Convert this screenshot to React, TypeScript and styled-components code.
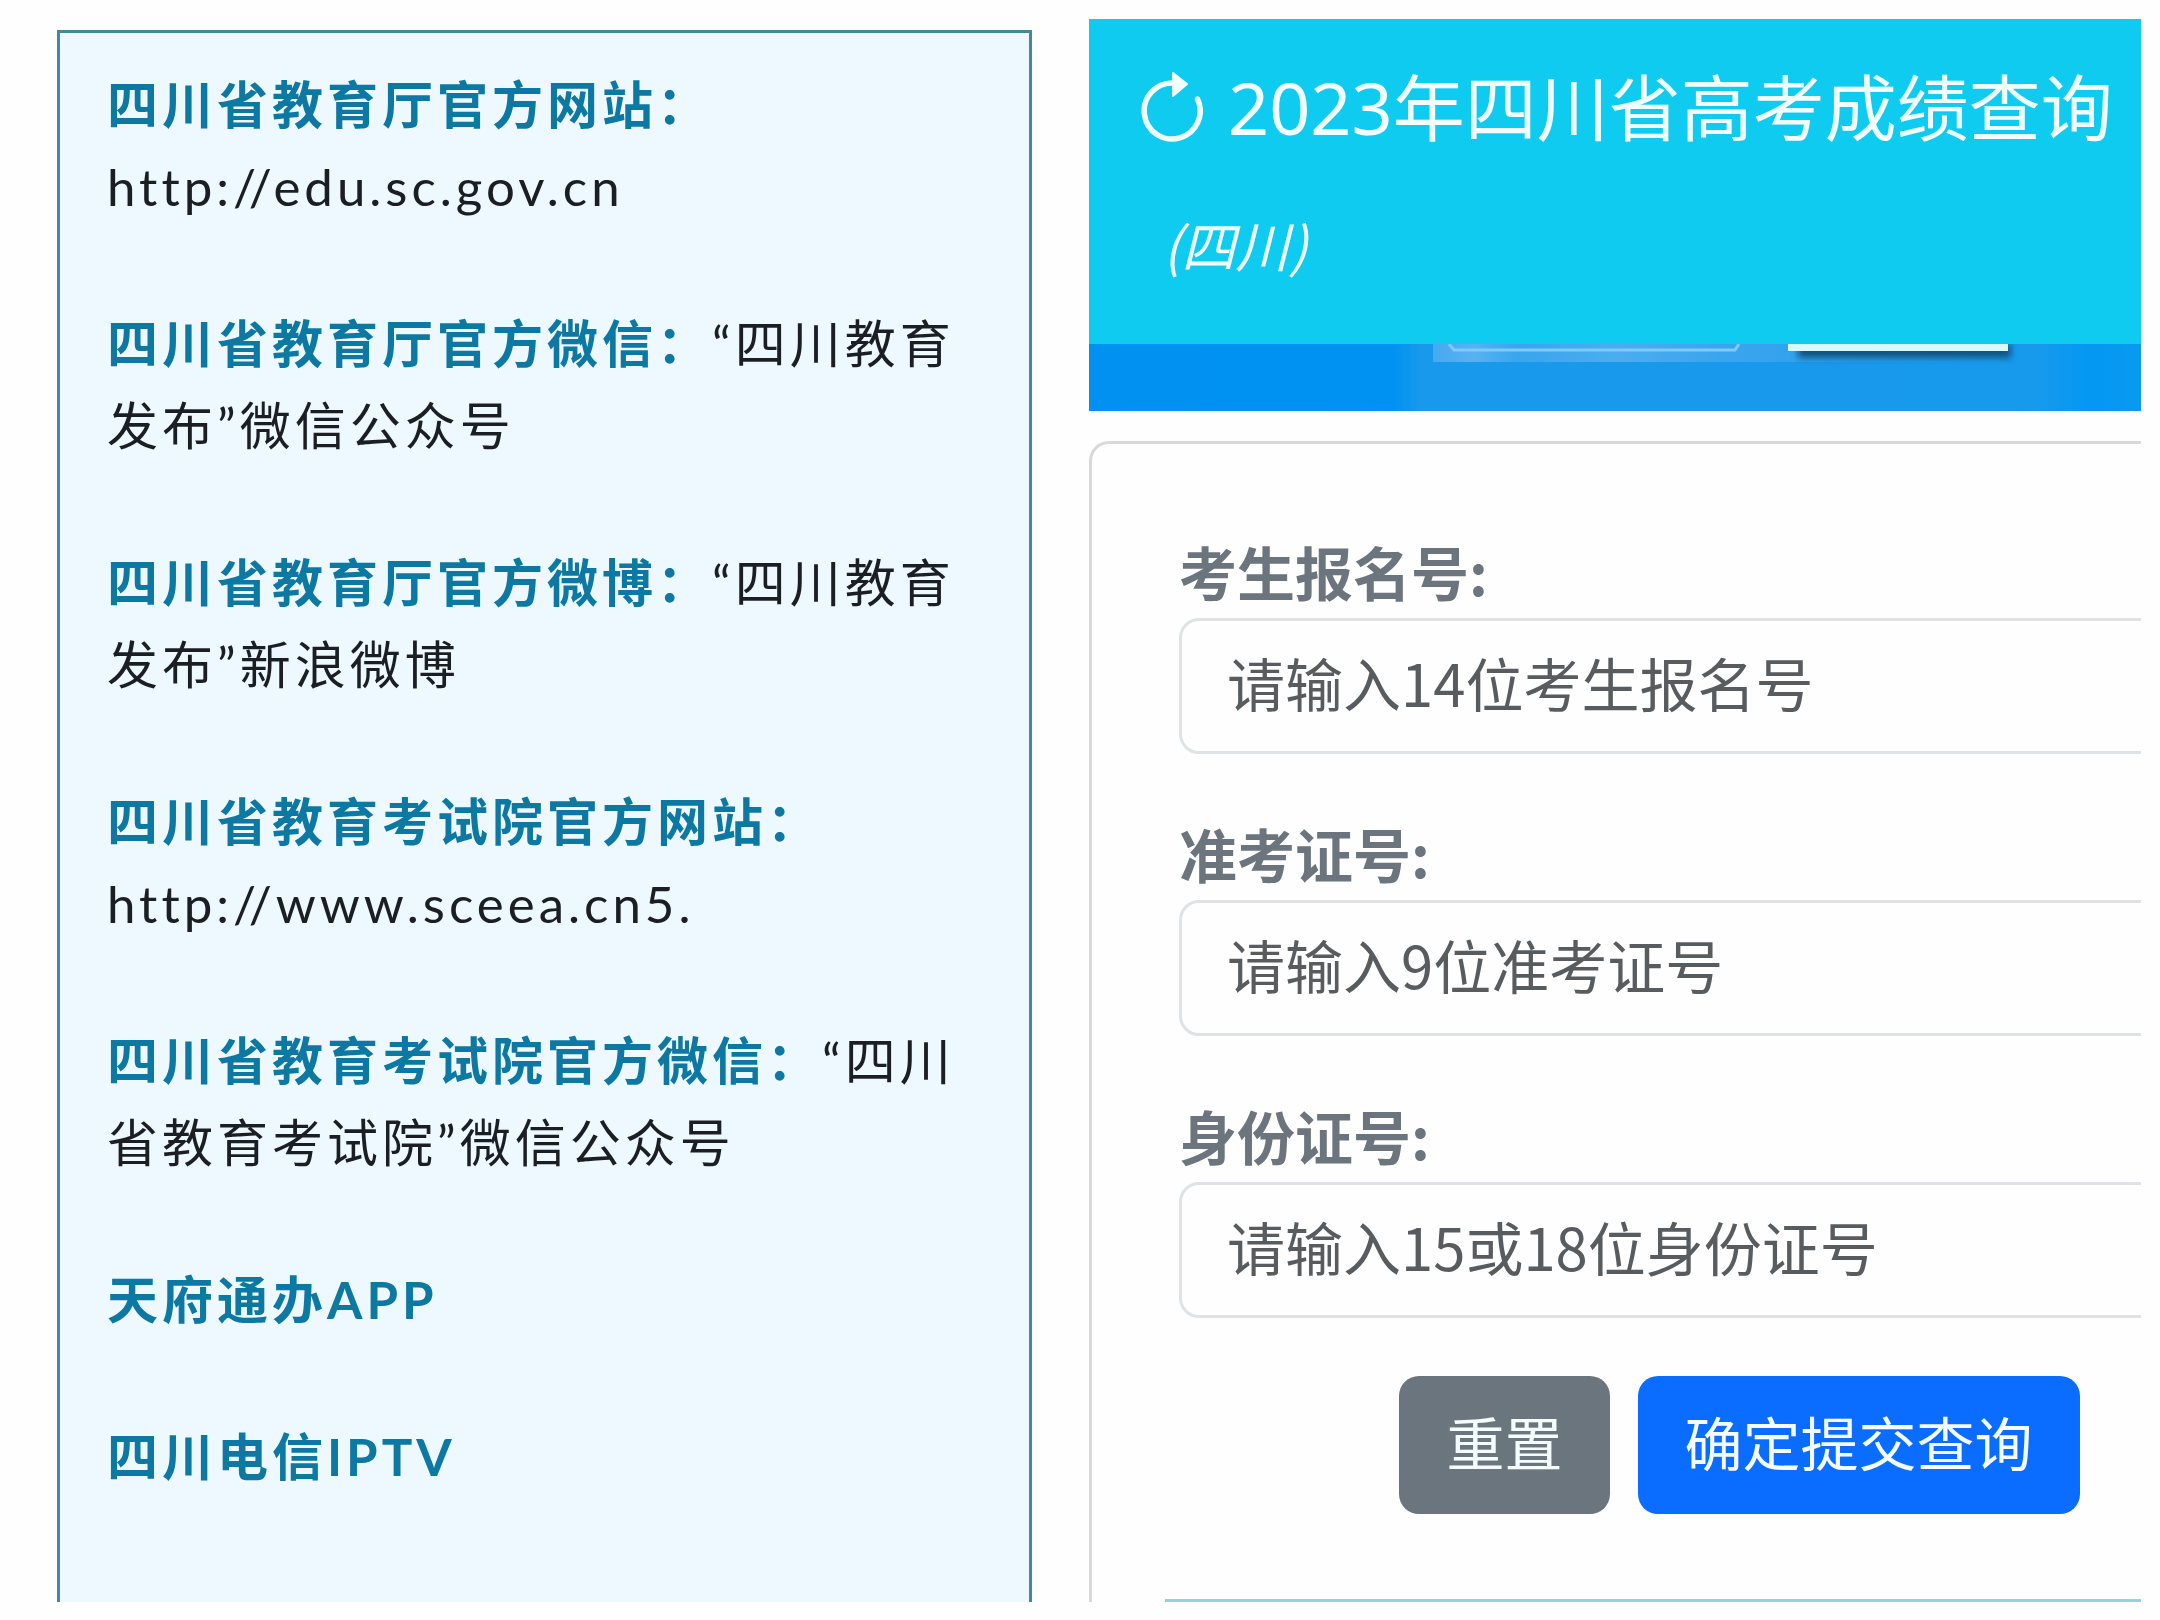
import React from 'react';
import styled, { createGlobalStyle, css } from 'styled-components';

const GlobalStyle = createGlobalStyle`
  *, *::before, *::after { box-sizing: border-box; }
  body {
    margin: 0;
    background: #fefefe;
    font-family: "Noto Sans CJK SC", sans-serif;
  }
`;

const Page = styled.main`
  display: grid;
  grid-template-columns: 975fr 1052fr;
  column-gap: 57px;
  padding: 19px 19px 18px 57px;
`;

const Channels = styled.section`
  display: flex;
  flex-direction: column;
  gap: 75px;
  margin-top: 11px;
  padding: 31px 47px 102px;
  border: 3px solid #42899a;
  border-bottom: 0;
  background: #edf8ff;
  color: #1b1e22;
  font-family: Lato, "Noto Sans CJK SC", sans-serif;
  font-size: 51px;
  line-height: 82px;
  letter-spacing: 4px;
`;

const Channel = styled.p`
  margin: 0;
`;

const ChannelName = styled.strong`
  color: #0d79a3;
  font-weight: 700;
`;

const SiteLink = styled.a`
  display: block;
  color: inherit;
  text-decoration: none;
`;

const Query = styled.section`
  display: flex;
  flex-direction: column;
  min-width: 0;
  overflow: hidden;
`;

const Header = styled.header`
  display: flex;
  flex-direction: column;
  gap: 44px;
  padding: 34px 20px 61px 52px;
  background: #0fcbf0;
  color: #f0ffff;
`;

const TitleRow = styled.div`
  display: flex;
  align-items: center;
  gap: 25px;
`;

const Refresh = styled.button`
  display: flex;
  flex: none;
  padding: 0;
  border: 0;
  background: none;
  color: inherit;
`;

const Title = styled.h1`
  margin: 0;
  font-family: "Noto Sans", "Noto Sans CJK SC", sans-serif;
  font-size: 72px;
  font-weight: 400;
  line-height: 108px;
  white-space: nowrap;
`;

const Region = styled.em`
  padding-left: 22px;
  font-size: 54px;
  line-height: 78px;
`;

const Banner = styled.svg`
  display: block;
  width: 100%;
  height: 67px;
`;

const Card = styled.div`
  width: calc(100% + 249px);
  margin-top: 30px;
  padding: 86px 73px 0;
  border: 3px solid #d9d9d9;
  border-bottom: 0;
  border-radius: 20px 20px 0 0;
`;

const Form = styled.form`
  display: flex;
  flex-direction: column;
  gap: 58px;
  padding: 0 14px 85px;
`;

const Field = styled.div`
  display: flex;
  flex-direction: column;
`;

const Label = styled.label`
  padding-bottom: 6px;
  color: #6c757d;
  font-size: 58px;
  font-weight: 700;
  line-height: 82px;
`;

const TextBox = styled.input`
  width: 100%;
  height: 136px;
  padding: 0 45px 8px;
  border: 3px solid #e0e3e5;
  border-radius: 20px;
  background: #fefefe;
  color: #212529;
  font-family: inherit;
  font-size: 58px;

  &::placeholder {
    color: #585c5f;
    opacity: 1;
  }
`;

const Actions = styled.div`
  display: flex;
  justify-content: center;
  gap: 28px;
`;

const Action = styled.button<{ $primary?: boolean }>`
  height: 138px;
  padding: 0 47px 8px;
  border: 0;
  border-radius: 20px;
  color: #f4fcff;
  font-family: inherit;
  font-size: 58px;
  white-space: nowrap;
  ${({ $primary }) =>
    $primary
      ? css`background: #0a6dff;`
      : css`background: #6b757d;`}
`;

const NextPanelEdge = styled.hr`
  margin: 0;
  border: 0;
  border-top: 3px solid #93d3da;
`;

interface ChannelItem {
  name: string;
  url?: string;
  detail?: string;
}

const channels: ChannelItem[] = [
  { name: '四川省教育厅官方网站：', url: 'http://edu.sc.gov.cn' },
  { name: '四川省教育厅官方微信：', detail: '“四川教育发布”微信公众号' },
  { name: '四川省教育厅官方微博：', detail: '“四川教育发布”新浪微博' },
  { name: '四川省教育考试院官方网站：', url: 'http://www.sceea.cn5.' },
  { name: '四川省教育考试院官方微信：', detail: '“四川省教育考试院”微信公众号' },
  { name: '天府通办APP' },
  { name: '四川电信IPTV' },
];

const fields = [
  { id: 'registration', label: '考生报名号:', hint: '请输入14位考生报名号' },
  { id: 'ticket', label: '准考证号:', hint: '请输入9位准考证号' },
  { id: 'identity', label: '身份证号:', hint: '请输入15或18位身份证号' },
];

function RefreshIcon() {
  return (
    <svg width="62" height="72" viewBox="0 0 62 72" fill="none" aria-hidden="true">
      <path d="M32 12A28 28 0 1 0 56.500 28" stroke="currentColor" strokeWidth="5.500" strokeLinecap="round" />
      <path d="M32 2L46 13L32 25Z" fill="currentColor" stroke="currentColor" strokeWidth="2" strokeLinejoin="round" />
    </svg>
  );
}

function BannerArt() {
  return (
    <Banner viewBox="0 0 1052 67" preserveAspectRatio="none" aria-hidden="true">
      <defs>
        <linearGradient id="sky" x1="0" x2="1" y1="0" y2="0">
          <stop offset="0" stopColor="#0091f1" />
          <stop offset="0.290" stopColor="#0092f2" />
          <stop offset="0.315" stopColor="#1899ec" />
          <stop offset="0.900" stopColor="#189aec" />
          <stop offset="0.950" stopColor="#0498f3" />
          <stop offset="1" stopColor="#0999f0" />
        </linearGradient>
        <linearGradient id="strip" x1="0" x2="1" y1="0" y2="0">
          <stop offset="0" stopColor="#45a9f1" />
          <stop offset="0.070" stopColor="#58b2f2" />
          <stop offset="0.150" stopColor="#38a5ee" />
          <stop offset="0.320" stopColor="#4badef" />
          <stop offset="0.500" stopColor="#3aa5ee" />
          <stop offset="1" stopColor="#1d9bec" />
        </linearGradient>
        <filter id="soft" x="-5%" y="-100%" width="110%" height="300%">
          <feGaussianBlur stdDeviation="3" />
        </filter>
      </defs>
      <rect width="1052" height="67" fill="url(#sky)" />
      <rect x="344" width="570" height="18" fill="url(#strip)" />
      <path d="M360 0L365 6H646L650 0" fill="none" stroke="#7fcaf8" strokeWidth="3" />
      <rect x="709" y="0" width="213" height="14" fill="#0b5482" filter="url(#soft)" />
      <rect x="699" width="220" height="7" fill="#dcf8ff" />
    </Banner>
  );
}

export default function App() {
  return (
    <>
      <GlobalStyle />
      <Page lang="zh-CN">
        <Channels>
          {channels.map(({ name, url, detail }) => (
            <Channel key={name}>
              <ChannelName>{name}</ChannelName>
              {url && <SiteLink href={url}>{url}</SiteLink>}
              {detail}
            </Channel>
          ))}
        </Channels>
        <Query>
          <Header>
            <TitleRow>
              <Refresh type="button" aria-label="刷新">
                <RefreshIcon />
              </Refresh>
              <Title>2023年四川省高考成绩查询</Title>
            </TitleRow>
            <Region>(四川)</Region>
          </Header>
          <BannerArt />
          <Card>
            <Form onSubmit={(event) => event.preventDefault()}>
              {fields.map(({ id, label, hint }) => (
                <Field key={id}>
                  <Label htmlFor={id}>{label}</Label>
                  <TextBox id={id} name={id} type="text" placeholder={hint} />
                </Field>
              ))}
              <Actions>
                <Action type="reset">重置</Action>
                <Action type="submit" $primary>确定提交查询</Action>
              </Actions>
            </Form>
            <NextPanelEdge />
          </Card>
        </Query>
      </Page>
    </>
  );
}
